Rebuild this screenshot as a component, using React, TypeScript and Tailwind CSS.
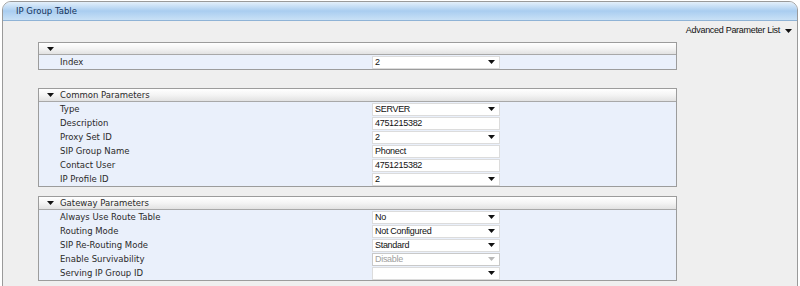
import React from 'react';

type Field = { label: string; value: string; kind: 'select' | 'text' | 'disabled' };

const indexFields: Field[] = [{ label: 'Index', value: '2', kind: 'select' }];

const commonFields: Field[] = [
  { label: 'Type', value: 'SERVER', kind: 'select' },
  { label: 'Description', value: '4751215382', kind: 'text' },
  { label: 'Proxy Set ID', value: '2', kind: 'select' },
  { label: 'SIP Group Name', value: 'Phonect', kind: 'text' },
  { label: 'Contact User', value: '4751215382', kind: 'text' },
  { label: 'IP Profile ID', value: '2', kind: 'select' },
];

const gatewayFields: Field[] = [
  { label: 'Always Use Route Table', value: 'No', kind: 'select' },
  { label: 'Routing Mode', value: 'Not Configured', kind: 'select' },
  { label: 'SIP Re-Routing Mode', value: 'Standard', kind: 'select' },
  { label: 'Enable Survivability', value: 'Disable', kind: 'disabled' },
  { label: 'Serving IP Group ID', value: '', kind: 'select' },
];

function Caret({ light }: { light?: boolean }) {
  return (
    <svg width="7" height="4" viewBox="0 0 7 4" className="shrink-0">
      <path d="M0 0 H7 L3.5 4 Z" fill={light ? '#b8b8b8' : '#111'} />
    </svg>
  );
}

function Input({ field }: { field: Field }) {
  const disabled = field.kind === 'disabled';
  return (
    <div
      className={`flex items-center justify-between w-[128px] h-[13px] pl-[2px] pr-[4px] bg-white border ${
        disabled ? 'border-[#c9c9c9]' : 'border-[#dcdcdc]'
      } font-['Liberation_Sans',sans-serif] text-[9px] leading-none tracking-[-0.3px] ${
        disabled ? 'text-[#a0a0a0]' : 'text-[#111]'
      }`}
    >
      <span>{field.value}</span>
      {field.kind !== 'text' && <Caret light={disabled} />}
    </div>
  );
}

function Section({ title, fields, headH }: { title: string; fields: Field[]; headH: string }) {
  return (
    <div className="w-[639px] border border-[#9c9c9c] bg-[#eaf0fb]">
      <div
        className={`flex items-center ${headH} bg-gradient-to-b from-white via-[#f4f4f4] to-[#e2e2e2] border-b border-[#a8a8a8]`}
      >
        <span className="w-[21px] flex justify-end pr-[6px]">
          <Caret />
        </span>
        <span className="text-[8.5px] leading-none text-[#2a2a2a]">{title}</span>
      </div>
      <div className="flex flex-col">
        {fields.map((f) => (
          <div key={f.label} className="flex items-center h-[14px]">
            <span className="w-[333px] pl-[21px] text-[8.5px] leading-none text-[#2a2a2a]">{f.label}</span>
            <Input field={f} />
          </div>
        ))}
      </div>
    </div>
  );
}

export default function App() {
  return (
    <div className="w-[800px] h-[286px] bg-white pl-[2px] pr-[2px] pt-[1px] overflow-hidden font-['DejaVu_Sans',sans-serif]">
      <div className="h-[290px] flex flex-col bg-[#efefef] border border-[#9a9a9a] rounded-t-[9px] overflow-hidden">
        <div className="h-[19px] shrink-0 flex items-center pl-[13px] bg-gradient-to-b from-[#e4f0fb] via-[#a9cdf0] to-[#c9e1f6] border-b border-[#8fb3d6]">
          <span className="text-[8.5px] leading-none text-[#12325a]">IP Group Table</span>
        </div>
        <div className="flex justify-end items-center h-[19px] pr-[5px] gap-[5px] font-['Liberation_Sans',sans-serif] text-[9px] tracking-[-0.3px] text-[#111]">
          <span>Advanced Parameter List</span>
          <Caret />
        </div>
        <div className="flex flex-col pl-[35px] pt-[2px]">
          <Section title="" fields={indexFields} headH="h-[12px]" />
          <div className="h-[18px]" />
          <Section title="Common Parameters" fields={commonFields} headH="h-[13px]" />
          <div className="h-[9px]" />
          <Section title="Gateway Parameters" fields={gatewayFields} headH="h-[13px]" />
        </div>
      </div>
    </div>
  );
}
